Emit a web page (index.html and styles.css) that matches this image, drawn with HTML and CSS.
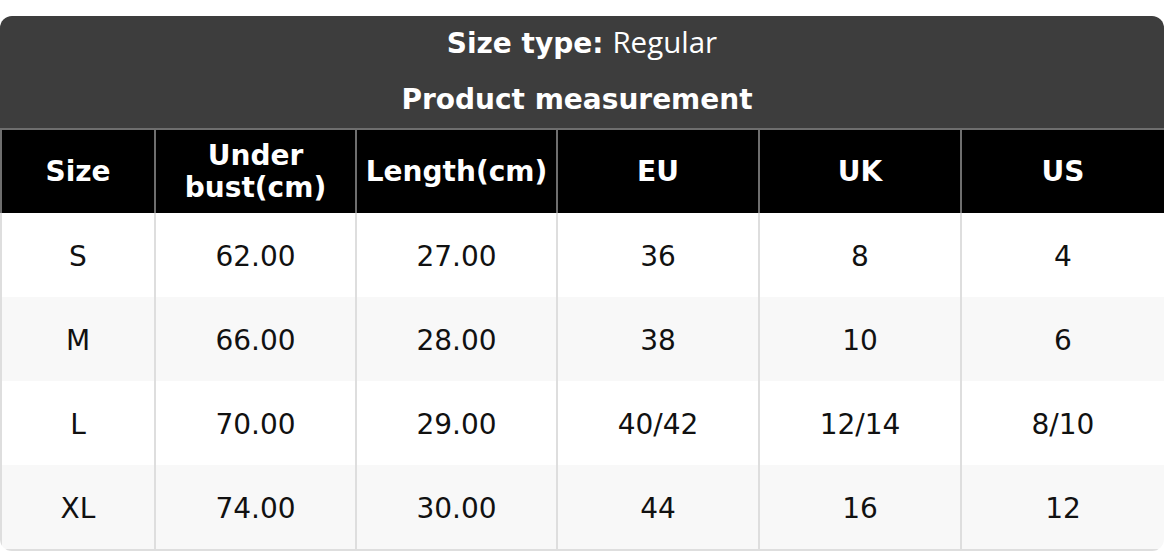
FILE: index.html
```html
<!DOCTYPE html>
<html lang="en">
<head>
<meta charset="utf-8">
<title>Size chart</title>
<link rel="stylesheet" href="styles.css">
</head>
<body>
<div class="card">
  <div class="title">
    <div class="title-line first"><span class="label">Size type:</span> <span class="value">Regular</span></div>
    <div class="title-line second label">Product measurement</div>
  </div>
  <table class="chart">
    <colgroup>
      <col class="c-size">
      <col class="c-wide">
      <col class="c-wide">
      <col class="c-mid">
      <col class="c-mid">
      <col class="c-last">
    </colgroup>
    <thead>
      <tr>
        <th>Size</th>
        <th>Under bust(cm)</th>
        <th>Length(cm)</th>
        <th>EU</th>
        <th>UK</th>
        <th>US</th>
      </tr>
    </thead>
    <tbody>
      <tr><td>S</td><td>62.00</td><td>27.00</td><td>36</td><td>8</td><td>4</td></tr>
      <tr><td>M</td><td>66.00</td><td>28.00</td><td>38</td><td>10</td><td>6</td></tr>
      <tr><td>L</td><td>70.00</td><td>29.00</td><td>40/42</td><td>12/14</td><td>8/10</td></tr>
      <tr><td>XL</td><td>74.00</td><td>30.00</td><td>44</td><td>16</td><td>12</td></tr>
    </tbody>
  </table>
</div>
</body>
</html>
```

FILE: styles.css
```css
html, body {
  margin: 0;
  padding: 0;
  background: #ffffff;
}

body {
  padding-top: 16px;
  font-family: "DejaVu Sans", sans-serif;
  font-size: 28px;
  color: #111111;
}

.card {
  width: 1164px;
  border-radius: 12px;
  overflow: hidden;
  background: #ffffff;
}

.title {
  background: #3d3d3d;
  color: #ffffff;
  text-align: center;
}

.title-line {
  height: 56px;
  line-height: 56px;
}

.title-line.first {
  line-height: 52px;
  height: 56px;
}

.title-line.second {
  padding-right: 10px;
}

.label {
  font-weight: bold;
}

.value {
  font-family: "Open Sans", "DejaVu Sans", sans-serif;
  font-weight: normal;
  font-size: 29.5px;
}

.chart {
  width: 1164px;
  border-collapse: collapse;
  table-layout: fixed;
}

.c-size { width: 154px; }
.c-wide { width: 201px; }
.c-mid { width: 202px; }
.c-last { width: 204px; }

.chart th {
  background: #000000;
  color: #ffffff;
  font-weight: bold;
  height: 83px;
  line-height: 32px;
  padding: 0 8px;
  border: 2px solid #6e6e6e;
  border-bottom: none;
  text-align: center;
  vertical-align: middle;
}

.chart td {
  height: 81px;
  padding: 3px 8px 0;
  text-align: center;
  vertical-align: middle;
  border-left: 2px solid #dedede;
  border-right: 2px solid #dedede;
  line-height: 32px;
}

.chart tbody tr:nth-child(even) td {
  background: #f8f8f8;
}

.chart tbody tr:last-child td {
  border-bottom: 2px solid #dedede;
}
```
